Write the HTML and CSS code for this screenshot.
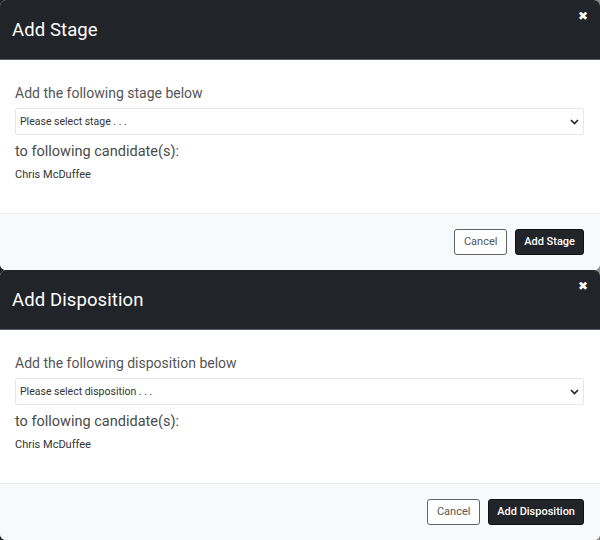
FILE: index.html
```html
<!DOCTYPE html>
<html>
<head>
<meta charset="utf-8">
<link rel="stylesheet" href="styles.css">
</head>
<body>
<div class="modal">
  <div class="modal-header">
    <h2 class="title">Add Stage</h2>
    <span class="close">&#x2716;</span>
  </div>
  <div class="modal-body">
    <div class="label">Add the following stage below</div>
    <div class="select">
      <span>Please select stage . . .</span>
      <svg class="chev" width="9" height="6" viewBox="0 0 9 6"><path d="M1 1 L4.5 4.5 L8 1" fill="none" stroke="#222" stroke-width="1.6"/></svg>
    </div>
    <div class="label label2">to following candidate(s):</div>
    <div class="name">Chris McDuffee</div>
  </div>
  <div class="modal-footer">
    <button class="btn btn-cancel">Cancel</button>
    <button class="btn btn-primary">Add Stage</button>
  </div>
</div>
<div class="modal">
  <div class="modal-header">
    <h2 class="title">Add Disposition</h2>
    <span class="close">&#x2716;</span>
  </div>
  <div class="modal-body">
    <div class="label">Add the following disposition below</div>
    <div class="select">
      <span>Please select disposition . . .</span>
      <svg class="chev" width="9" height="6" viewBox="0 0 9 6"><path d="M1 1 L4.5 4.5 L8 1" fill="none" stroke="#222" stroke-width="1.6"/></svg>
    </div>
    <div class="label label2">to following candidate(s):</div>
    <div class="name">Chris McDuffee</div>
  </div>
  <div class="modal-footer">
    <button class="btn btn-cancel">Cancel</button>
    <button class="btn btn-primary">Add Disposition</button>
  </div>
</div>
</body>
</html>
```
FILE: styles.css
```css
html, body {
  margin: 0;
  padding: 0;
}
body {
  width: 600px;
  height: 540px;
  overflow: hidden;
  background: linear-gradient(to right, #1c1e21 0, #1c1e21 50%, #8a8a8a 50%, #8a8a8a 100%);
  font-family: Roboto, "Liberation Sans", sans-serif;
}
.modal {
  height: 270px;
  display: flex;
  flex-direction: column;
  border-radius: 6px;
  overflow: hidden;
  background: #fff;
}
.modal-header {
  height: 59px;
  background: #212428;
  border-bottom: 1px solid #5a5d61;
  display: flex;
  justify-content: space-between;
  align-items: flex-start;
  padding: 0 12px 0 12px;
}
.title {
  margin: 0;
  line-height: 60px;
  color: #fff;
  font-size: 18.5px;
  font-weight: 400;
  letter-spacing: 0.1px;
}
.close {
  color: #fff;
  font-size: 12px;
  margin-top: 10px;
  line-height: 12px;
}
.modal-body {
  flex: 1;
  padding: 23px 16px 0 15px;
}
.label {
  font-size: 14px;
  line-height: 20px;
  color: #555;
  letter-spacing: 0;
}
.label2 {
  margin-top: 7px;
  font-size: 14.5px;
  color: #4a4a4a;
}
.select {
  margin-top: 5px;
  height: 25px;
  border: 1px solid #e6e6e6;
  border-radius: 2px;
  display: flex;
  align-items: center;
  justify-content: space-between;
  padding: 0 4px 0 4px;
  font-size: 10.5px;
  color: #333;
}
.name {
  margin-top: 5px;
  font-size: 11px;
  line-height: 16px;
  color: #333;
}
.modal-footer {
  background: #f8f9fa;
  border-top: 1px solid #ebedef;
  display: flex;
  justify-content: flex-end;
  align-items: flex-start;
  gap: 8px;
  padding: 15px 16px 0 0;
  box-sizing: border-box;
  height: 57px;
}
.btn {
  height: 26px;
  padding: 0 8px;
  border-radius: 3px;
  font-family: inherit;
  font-size: 11px;
  line-height: 24px;
}
.btn-cancel {
  background: #fff;
  border: 1px solid #5f6368;
  color: #555;
  width: 53px;
}
.btn-primary {
  background: #212428;
  border: 1px solid #111;
  color: #fff;
  font-weight: 500;
}
```
